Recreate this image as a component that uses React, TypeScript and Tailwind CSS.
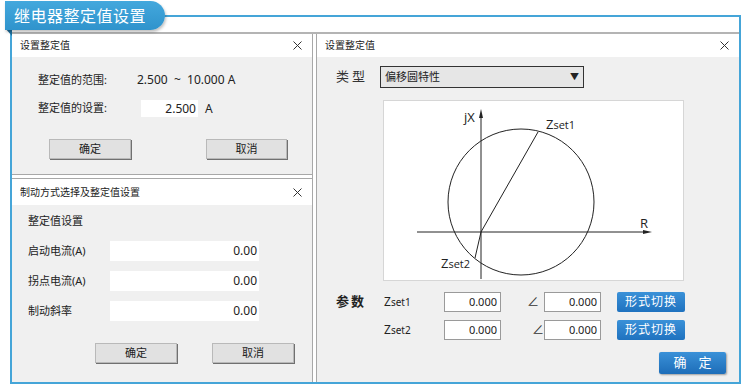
import React from "react";

const font = "font-['Noto_Sans','Noto_Sans_CJK_SC',sans-serif]";

function CloseX() {
  return (
    <svg width="9" height="9" viewBox="0 0 9 9" className="shrink-0">
      <path d="M0.5 0.5 L8.5 8.5 M8.5 0.5 L0.5 8.5" stroke="#333" strokeWidth="1" />
    </svg>
  );
}

function TitleBar({ title, h }: { title: string; h: string }) {
  return (
    <div className={`${h} bg-white flex items-center justify-between pl-[8px] pr-[10px]`}>
      <span className="text-[10px] text-[#222]">{title}</span>
      <CloseX />
    </div>
  );
}

function WinButton({ label, w }: { label: string; w: string }) {
  return (
    <button
      className={`${w} h-[20px] bg-[#e1e1e1] border border-[#b9b9b9] shadow-[1px_1px_0_#707070] text-[11px] text-[#222] flex items-center justify-center`}
    >
      {label}
    </button>
  );
}

function Chart() {
  return (
    <div className="ml-[66px] mt-[12px] w-[301px] h-[181px] bg-white border border-[#d6d6d6]">
      <svg width="299" height="179" viewBox="0 0 299 179">
        <g stroke="#222" strokeWidth="1" fill="none">
          <circle cx="137" cy="101" r="73" />
          <line x1="97" y1="14" x2="97" y2="178" />
          <line x1="33" y1="131" x2="262" y2="131" />
          <line x1="97" y1="131" x2="154" y2="31" />
          <line x1="97" y1="131" x2="91" y2="157" />
        </g>
        <polygon points="97,8 95,17 99,17" fill="#222" />
        <polygon points="268,131 259,129 259,133" fill="#222" />
        <g fontFamily="'Open Sans','Noto Sans',sans-serif" fill="#222">
          <text x="80" y="21" fontSize="13">jX</text>
          <text x="162" y="28" fontSize="13">Z<tspan fontSize="11">set1</tspan></text>
          <text x="256" y="127" fontSize="13">R</text>
          <text x="57" y="167" fontSize="13">Z<tspan fontSize="11">set2</tspan></text>
        </g>
      </svg>
    </div>
  );
}

function ParamRow({ label, head, angleX }: { label: string; head?: string; angleX: string }) {
  return (
    <div className="flex items-center h-[20px]">
      <span className="w-[67px] pl-[19px] whitespace-nowrap text-[13px] font-bold text-[#222] tracking-[2px]">{head}</span>
      <span className="w-[60px] text-[12px] text-[#222]">
        Z<span className="text-[10px]">{label}</span>
      </span>
      <div className="w-[57px] h-[20px] bg-white border border-[#9a9a9a] flex items-center justify-end pr-[3px] text-[11px] text-[#222]">
        0.000
      </div>
      <span className={`${angleX} text-[12px] text-[#333]`}>∠</span>
      <div className="w-[57px] h-[20px] bg-white border border-[#9a9a9a] flex items-center justify-end pr-[3px] text-[11px] text-[#222]">
        0.000
      </div>
      <button className="ml-[16px] w-[68px] h-[20px] rounded-[2px] bg-gradient-to-b from-[#3a91d8] to-[#1f72bf] text-white text-[12px] tracking-[1px] flex items-center justify-center">
        形式切换
      </button>
    </div>
  );
}

export default function App() {
  return (
    <div className={`w-[744px] h-[386px] bg-white relative overflow-hidden ${font}`}>
      {/* tab */}
      <div className="absolute left-[5px] top-[28px] w-0 h-0 border-t-[8px] border-t-[#1d6e9c] border-l-[7px] border-l-transparent" />
      <div className="absolute left-[5px] top-[1px] w-[160px] h-[29px] rounded-tl-[3px] rounded-r-full bg-gradient-to-b from-[#43a8dd] to-[#2f93cc] shadow-[1px_2px_3px_rgba(0,0,0,0.25)] flex items-center pl-[9px]">
        <span className="text-white text-[16px] tracking-[0.5px]">继电器整定值设置</span>
      </div>

      <div className="ml-[10px] mt-[15px] w-[731px] h-[369px] border-2 border-[#45a5d8] flex flex-col">
        <div className="h-[15px] shrink-0" />
        <div className="flex-1 flex border-t-2 border-[#b4b4b4]">
          {/* left column */}
          <div className="w-[301px] border-r border-[#a8a8a8] flex flex-col">
            <div className="h-[141px] flex flex-col border-b border-[#a8a8a8]">
              <TitleBar title="设置整定值" h="h-[23px]" />
              <div className="flex-1 bg-[#f0f0f0] flex flex-col text-[11px] text-[#222]">
                <div className="mt-[16px] h-[14px] flex items-center">
                  <span className="ml-[26px] w-[99px]">整定值的范围:</span>
                  <span className="text-[12px] whitespace-pre">2.500  ~  10.000 A</span>
                </div>
                <div className="mt-[13px] h-[17px] flex items-center">
                  <span className="ml-[26px] w-[103px]">整定值的设置:</span>
                  <div className="w-[57px] h-[17px] bg-white flex items-center justify-end pr-[2px] text-[12px]">
                    2.500
                  </div>
                  <span className="ml-[7px] text-[12px]">A</span>
                </div>
                <div className="mt-[22px] flex">
                  <div className="ml-[37px]">
                    <WinButton label="确定" w="w-[82px]" />
                  </div>
                  <div className="ml-[75px]">
                    <WinButton label="取消" w="w-[81px]" />
                  </div>
                </div>
              </div>
            </div>
            <div className="h-[3px] bg-white" />
            <div className="flex-1 flex flex-col border-t border-[#a8a8a8]">
              <TitleBar title="制动方式选择及整定值设置" h="h-[26px]" />
              <div className="flex-1 bg-[#f0f0f0] flex flex-col text-[11px] text-[#222]">
                <div className="mt-[9px] ml-[16px] h-[14px] flex items-center">整定值设置</div>
                {["启动电流(A)", "拐点电流(A)", "制动斜率"].map((l, i) => (
                  <div key={l} className={`${i === 0 ? "mt-[13px]" : "mt-[10px]"} h-[20px] flex items-center`}>
                    <span className="ml-[16px] w-[82px]">{l}</span>
                    <div className="w-[149px] h-[20px] bg-white flex items-center justify-end pr-[2px] text-[12px]">
                      0.00
                    </div>
                  </div>
                ))}
                <div className="mt-[22px] flex">
                  <div className="ml-[83px]">
                    <WinButton label="确定" w="w-[82px]" />
                  </div>
                  <div className="ml-[35px]">
                    <WinButton label="取消" w="w-[82px]" />
                  </div>
                </div>
              </div>
            </div>
          </div>
          <div className="w-[3px] bg-white" />
          {/* right panel */}
          <div className="flex-1 border-l border-[#a8a8a8] flex flex-col">
            <TitleBar title="设置整定值" h="h-[23px]" />
            <div className="flex-1 bg-[#f0f0f0] flex flex-col text-[#222]">
              <div className="mt-[9px] h-[22px] flex items-center">
                <span className="ml-[19px] w-[44px] text-[13px] tracking-[3px] text-[#333]">类型</span>
                <div className="w-[204px] h-[22px] bg-[#e6e6e6] border border-[#333] flex items-center justify-between pl-[4px] pr-[4px]">
                  <span className="text-[11px]">偏移圆特性</span>
                  <span className="text-[9px]">▼</span>
                </div>
              </div>
              <Chart />
              <div className="mt-[11px] flex flex-col gap-[8px]">
                <ParamRow head="参数" label="set1" angleX="ml-[26px] w-[17px]" />
                <ParamRow label="set2" angleX="ml-[31px] w-[12px]" />
              </div>
              <div className="mt-[12px] flex justify-end pr-[13px]">
                <button className="w-[67px] h-[22px] rounded-[2px] bg-gradient-to-b from-[#3a91d8] to-[#1d6db8] shadow-[1px_1px_2px_rgba(0,0,0,0.35)] text-white text-[13px] tracking-[12px] pl-[12px] flex items-center justify-center">
                  确定
                </button>
              </div>
            </div>
          </div>
        </div>
      </div>
    </div>
  );
}
